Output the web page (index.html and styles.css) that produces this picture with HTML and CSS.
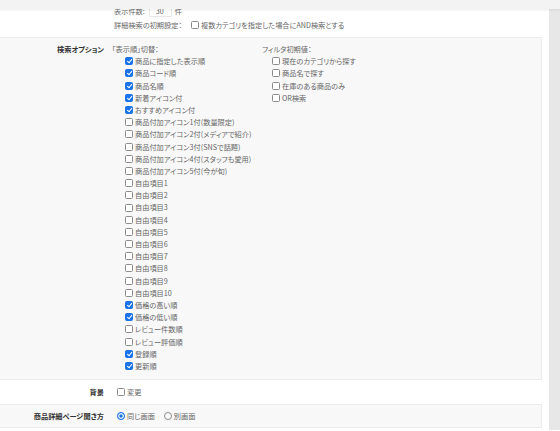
FILE: index.html
```html
<!DOCTYPE html>
<html lang="ja">
<head>
<meta charset="utf-8">
<title>検索設定</title>
<link rel="stylesheet" href="styles.css">
</head>
<body>
<div class="topbar"></div>
<div class="page">
  <main class="panel">
    <div class="row row-first">
      <div class="label"></div>
      <div class="value value-first">
        <div class="line">表示件数:<span class="num">30</span>件</div>
        <div class="line">詳細検索の初期設定：<label class="check check-inline"><input type="checkbox">複数カテゴリを指定した場合にAND検索とする</label></div>
      </div>
    </div>

    <div class="row row-gray row-options">
      <div class="label">検索オプション</div>
      <div class="value options">
        <div class="col col-sort">
          <div class="line">「表示順」切替：</div>
          <ul class="list list-sort">
            <li><label class="check"><input type="checkbox" checked>商品に指定した表示順</label></li>
            <li><label class="check"><input type="checkbox" checked>商品コード順</label></li>
            <li><label class="check"><input type="checkbox" checked>商品名順</label></li>
            <li><label class="check"><input type="checkbox" checked>新着アイコン付</label></li>
            <li><label class="check"><input type="checkbox" checked>おすすめアイコン付</label></li>
            <li><label class="check"><input type="checkbox">商品付加アイコン1付(数量限定)</label></li>
            <li><label class="check"><input type="checkbox">商品付加アイコン2付(メディアで紹介)</label></li>
            <li><label class="check"><input type="checkbox">商品付加アイコン3付(SNSで話題)</label></li>
            <li><label class="check"><input type="checkbox">商品付加アイコン4付(スタッフも愛用)</label></li>
            <li><label class="check"><input type="checkbox">商品付加アイコン5付(今が旬)</label></li>
            <li><label class="check"><input type="checkbox">自由項目1</label></li>
            <li><label class="check"><input type="checkbox">自由項目2</label></li>
            <li><label class="check"><input type="checkbox">自由項目3</label></li>
            <li><label class="check"><input type="checkbox">自由項目4</label></li>
            <li><label class="check"><input type="checkbox">自由項目5</label></li>
            <li><label class="check"><input type="checkbox">自由項目6</label></li>
            <li><label class="check"><input type="checkbox">自由項目7</label></li>
            <li><label class="check"><input type="checkbox">自由項目8</label></li>
            <li><label class="check"><input type="checkbox">自由項目9</label></li>
            <li><label class="check"><input type="checkbox">自由項目10</label></li>
            <li><label class="check"><input type="checkbox" checked>価格の高い順</label></li>
            <li><label class="check"><input type="checkbox" checked>価格の低い順</label></li>
            <li><label class="check"><input type="checkbox">レビュー件数順</label></li>
            <li><label class="check"><input type="checkbox">レビュー評価順</label></li>
            <li><label class="check"><input type="checkbox" checked>登録順</label></li>
            <li><label class="check"><input type="checkbox" checked>更新順</label></li>
          </ul>
        </div>
        <div class="col col-filter">
          <div class="line">フィルタ初期値：</div>
          <ul class="list list-filter">
            <li><label class="check"><input type="checkbox">現在のカテゴリから探す</label></li>
            <li><label class="check"><input type="checkbox">商品名で探す</label></li>
            <li><label class="check"><input type="checkbox">在庫のある商品のみ</label></li>
            <li><label class="check"><input type="checkbox">OR検索</label></li>
          </ul>
        </div>
      </div>
    </div>

    <div class="row row-single">
      <div class="label">背景</div>
      <div class="value value-inline">
        <label class="check"><input type="checkbox">変更</label>
      </div>
    </div>

    <div class="row row-gray row-single">
      <div class="label">商品詳細ページ開き方</div>
      <div class="value value-inline radios">
        <label class="check"><input type="radio" name="open" checked>同じ画面</label>
        <label class="check"><input type="radio" name="open">別画面</label>
      </div>
    </div>
  </main>
  <div class="scrollbar"></div>
</div>
</body>
</html>
```

FILE: styles.css
```css
* { box-sizing: border-box; }

html, body {
  margin: 0;
  padding: 0;
  background: #ffffff;
}

body {
  font-family: "Noto Sans CJK JP", "Noto Sans", sans-serif;
  font-size: 7.2px;
  font-feature-settings: "palt";
  color: #666666;
  overflow: hidden;
}

.topbar {
  position: fixed;
  top: 0;
  left: 0;
  right: 0;
  height: 9px;
  background: #f3f3f3;
  box-shadow: 0 1px 3px rgba(0, 0, 0, 0.08);
  z-index: 5;
}

.page {
  display: flex;
  height: 431px;
}

.panel {
  width: 549px;
  padding-right: 7px;
  background: #ffffff;
}

.scrollbar {
  width: 11px;
  height: 430px;
  background: #e7e7e7;
}

.row {
  display: grid;
  grid-template-columns: 104px 1fr;
  column-gap: 8px;
}

.row-gray {
  background: #f8f8f8;
  border-top: 1px solid #ececec;
  border-bottom: 1px solid #ececec;
  border-right: 1px solid #ececec;
}

.label {
  text-align: right;
  font-weight: bold;
  color: #333333;
}

.line {
  line-height: 14px;
  white-space: nowrap;
}

.row-first {
  height: 37px;
  padding-top: 4px;
}

.value-first {
  padding-left: 2px;
}

.value-first .line {
  display: flex;
  align-items: center;
}

.num {
  display: inline-block;
  width: 23px;
  height: 17px;
  margin: -6px 3px 0 4px;
  padding: 6px 0 0 6px;
  line-height: 10px;
  border: 1px solid #e6e6e6;
  border-top: none;
  border-radius: 0 0 2px 2px;
  background: #ffffff;
}

.check-inline {
  margin-left: 9px;
}

.row-options {
  height: 343px;
  padding-top: 5px;
}

.row-options .label {
  line-height: 12.2px;
}

.options {
  display: flex;
}

.options .line {
  line-height: 12.2px;
}

.col-sort {
  width: 150px;
}

.list {
  list-style: none;
  margin: 0;
  padding: 0;
}

.list li {
  line-height: 12.2px;
  height: 12.2px;
}

.list-sort {
  padding-left: 13px;
}

.list-filter {
  padding-left: 10px;
}

.check {
  display: inline-flex;
  align-items: center;
  white-space: nowrap;
}

.check input {
  -webkit-appearance: none;
  appearance: none;
  position: relative;
  flex: none;
  width: 8px;
  height: 8px;
  margin: 0 2px 0 0;
  border: 1px solid #8a8a8a;
  border-radius: 1.5px;
  background: #ffffff;
}

.check input[type="checkbox"]:checked {
  background: #1a73e8;
  border-color: #1a73e8;
}

.check input[type="checkbox"]:checked::after {
  content: "";
  position: absolute;
  left: 1.6px;
  top: 0px;
  width: 2.2px;
  height: 4.2px;
  border-right: 1.2px solid #ffffff;
  border-bottom: 1.2px solid #ffffff;
  transform: rotate(40deg);
}

.check input[type="radio"] {
  border-radius: 50%;
}

.check input[type="radio"]:checked {
  border-color: #1a73e8;
  background: #1a73e8;
  box-shadow: inset 0 0 0 1.3px #ffffff;
}

.row-single {
  height: 24px;
  align-items: center;
}

.value-inline {
  display: flex;
  align-items: center;
  padding-left: 5px;
}

.radios {
  gap: 9px;
}
```
